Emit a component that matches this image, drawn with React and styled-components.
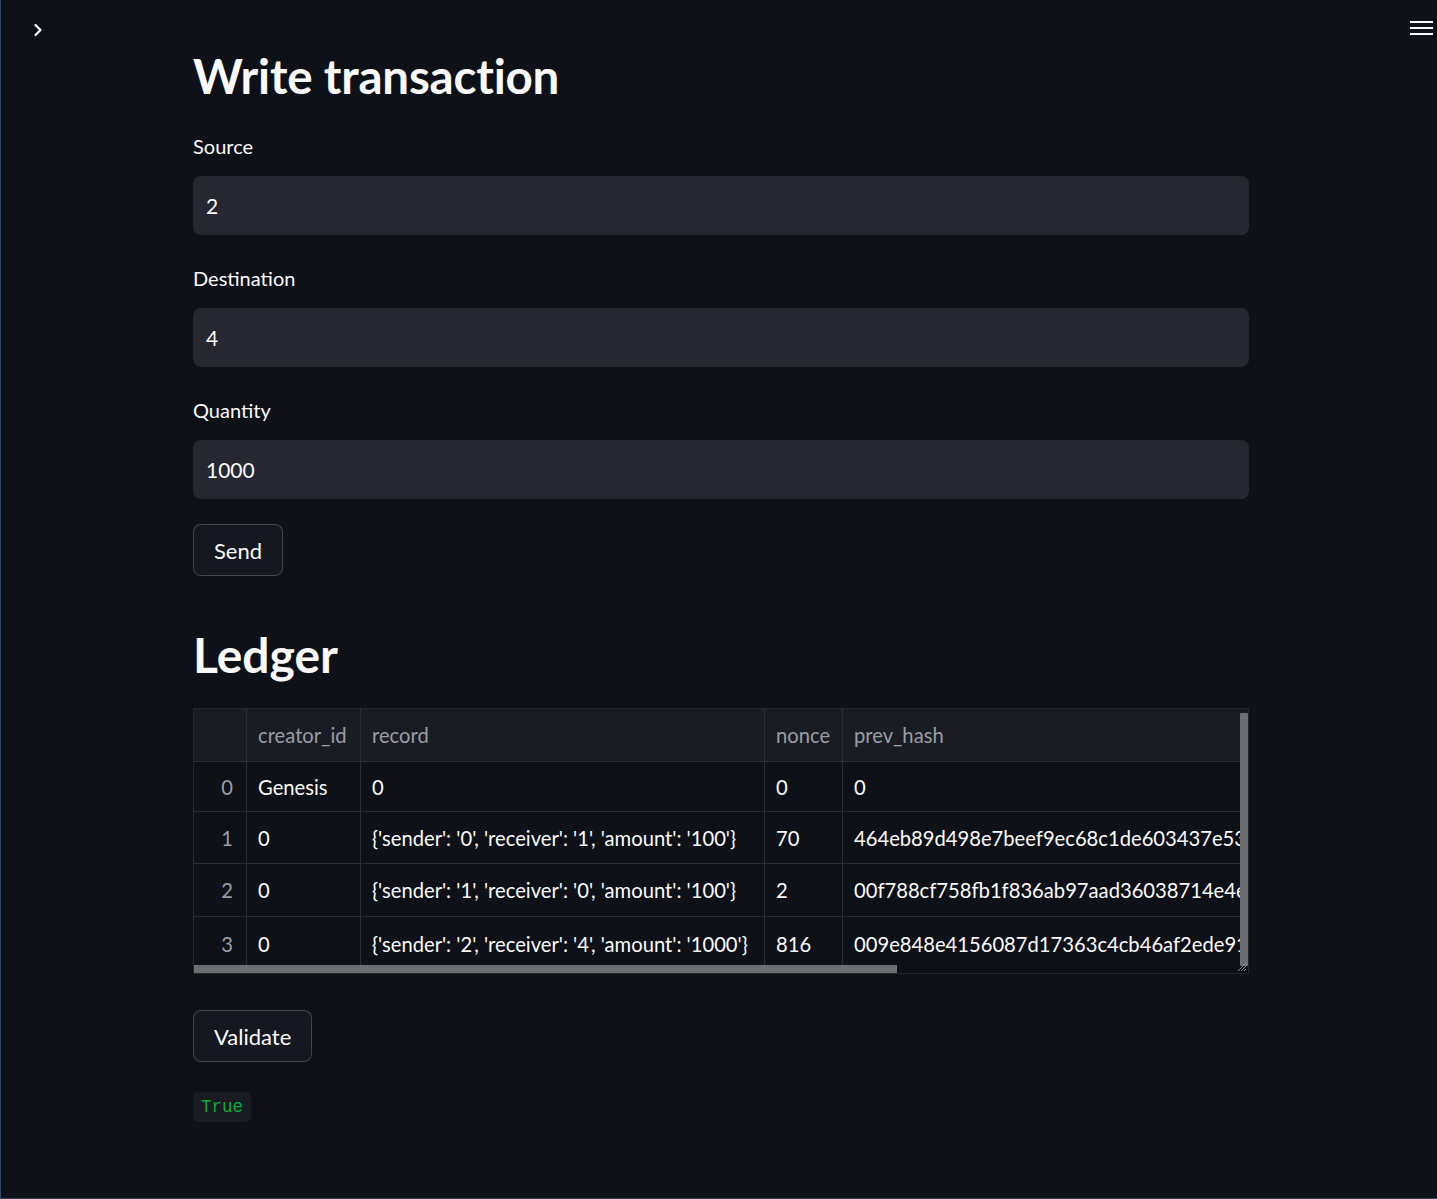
import React from "react";
import styled, { createGlobalStyle } from "styled-components";

const Global = createGlobalStyle`
  html, body { margin: 0; padding: 0; background: #0e1117; }
  body { font-family: Lato, "Noto Sans", sans-serif; color: #fafafa; }
  * { box-sizing: border-box; }
`;

const Page = styled.div`
  position: relative;
  height: 1199px;
  background: #0e1117;
  border-left: 1px solid #2e4a68;
  border-bottom: 1px solid #2e4a68;
  overflow: hidden;
`;

const SideToggle = styled.button`
  position: absolute;
  left: 29px;
  top: 21px;
  width: 16px;
  height: 18px;
  padding: 0;
  border: 0;
  background: none;
  display: flex;
  align-items: center;
  justify-content: center;
`;

const MenuButton = styled.button`
  position: absolute;
  right: 3px;
  top: 18px;
  width: 24px;
  height: 20px;
  padding: 0;
  border: 0;
  background: none;
  display: flex;
  flex-direction: column;
  justify-content: center;
  gap: 4px;
`;

const MenuLine = styled.span`
  display: block;
  height: 2px;
  width: 23px;
  background: #fafafa;
`;

const Main = styled.main`
  width: 1056px;
  margin-left: 192px;
  padding-top: 46px;
  display: flex;
  flex-direction: column;
`;

const H1 = styled.h1`
  margin: 0;
  font-family: Lato, sans-serif;
  font-weight: 700;
  font-size: 47.5px;
  line-height: 60px;
  letter-spacing: -0.2px;
`;

const H2 = styled.h2`
  margin: 49px 0 0;
  font-family: Lato, sans-serif;
  font-weight: 700;
  font-size: 48px;
  line-height: 60px;
  letter-spacing: 0;
`;

const Field = styled.div`
  display: flex;
  flex-direction: column;
  margin-top: ${(p) => p.$mt}px;
`;

const Label = styled.label`
  font-size: 20px;
  line-height: 26px;
  color: #fafafa;
  margin-bottom: 17px;
`;

const Input = styled.div`
  height: 59px;
  background: #262730;
  border-radius: 8px;
  padding: 0 13px;
  display: flex;
  align-items: center;
  font-size: 21px;
  color: #fafafa;
`;

const Button = styled.button`
  align-self: flex-start;
  height: 52px;
  padding: 0 20px;
  margin-top: ${(p) => p.$mt}px;
  background: #151820;
  border: 1px solid rgba(250, 250, 250, 0.2);
  border-radius: 8px;
  color: #fafafa;
  font-family: Lato, sans-serif;
  font-size: 22px;
`;

const TableWrap = styled.div`
  position: relative;
  margin-top: 23px;
  height: 266px;
  border: 1px solid #23262d;
  overflow: hidden;
  background: #0e1117;
`;

const Grid = styled.div`
  display: grid;
  grid-template-columns: 53px 114px 404px 78px 520px;
  grid-template-rows: 53px 50px 52px 53px 53px;
  width: max-content;
`;

const Cell = styled.div`
  display: flex;
  align-items: center;
  justify-content: ${(p) => (p.$index ? "flex-end" : "flex-start")};
  padding: 0 ${(p) => (p.$index ? "13px" : "11px")};
  font-size: 20.2px;
  white-space: nowrap;
  overflow: hidden;
  color: ${(p) => (p.$head || p.$index ? "#9a9da6" : "#fafafa")};
  background: ${(p) => (p.$head ? "#1a1c23" : "#0e1117")};
  border-right: 1px solid #2a2d34;
  border-bottom: ${(p) => (p.$last ? "0" : "1px solid #2a2d34")};
`;

const VScroll = styled.div`
  position: absolute;
  right: 0;
  top: 4px;
  width: 8px;
  height: 253px;
  background: #6d6e72;
  border-radius: 1px;
`;

const HScroll = styled.div`
  position: absolute;
  left: 0;
  bottom: 0;
  width: 703px;
  height: 8px;
  background: #6d6e72;
`;

const Resize = styled.svg`
  position: absolute;
  right: 1px;
  bottom: 1px;
`;

const Code = styled.code`
  align-self: flex-start;
  margin-top: 30px;
  background: #1a1c23;
  border-radius: 5px;
  padding: 0 8px;
  height: 30px;
  display: flex;
  align-items: center;
  font-family: "Liberation Mono", monospace;
  font-size: 17.5px;
  color: #09ab3b;
`;

const columns = ["", "creator_id", "record", "nonce", "prev_hash"];
const rows = [
  ["0", "Genesis", "0", "0", "0"],
  ["1", "0", "{'sender': '0', 'receiver': '1', 'amount': '100'}", "70", "464eb89d498e7beef9ec68c1de603437e5347a1b2c3d4e5f"],
  ["2", "0", "{'sender': '1', 'receiver': '0', 'amount': '100'}", "2", "00f788cf758fb1f836ab97aad36038714e4e11f9a8c7d6e5"],
  ["3", "0", "{'sender': '2', 'receiver': '4', 'amount': '1000'}", "816", "009e848e4156087d17363c4cb46af2ede91a0c3f7b2e1d9"],
];

export default function App() {
  return (
    <Page>
      <Global />
      <SideToggle aria-label="open sidebar">
        <svg width="10" height="16" viewBox="0 0 10 16">
          <path d="M2.5 3 L7.5 8 L2.5 13" fill="none" stroke="#fafafa" strokeWidth="2.2" strokeLinecap="round" strokeLinejoin="round" />
        </svg>
      </SideToggle>
      <MenuButton aria-label="menu">
        <MenuLine />
        <MenuLine />
        <MenuLine />
      </MenuButton>
      <Main>
        <H1>Write transaction</H1>
        <Field $mt={27}>
          <Label>Source</Label>
          <Input>2</Input>
        </Field>
        <Field $mt={30}>
          <Label>Destination</Label>
          <Input>4</Input>
        </Field>
        <Field $mt={30}>
          <Label>Quantity</Label>
          <Input>1000</Input>
        </Field>
        <Button $mt={25}>Send</Button>
        <H2>Ledger</H2>
        <TableWrap>
          <Grid>
            {columns.map((c, i) => (
              <Cell key={"h" + i} $head>{c}</Cell>
            ))}
            {rows.map((r, ri) =>
              r.map((v, ci) => (
                <Cell key={ri + "-" + ci} $index={ci === 0} $last={ri === rows.length - 1}>
                  {v}
                </Cell>
              ))
            )}
          </Grid>
          <VScroll />
          <HScroll />
          <Resize width="12" height="12" viewBox="0 0 12 12">
            <path d="M11 3 L3 11 M11 6 L6 11 M11 9 L9 11" stroke="#8a8c92" strokeWidth="1" />
          </Resize>
        </TableWrap>
        <Button $mt={36}>Validate</Button>
        <Code>True</Code>
      </Main>
    </Page>
  );
}
